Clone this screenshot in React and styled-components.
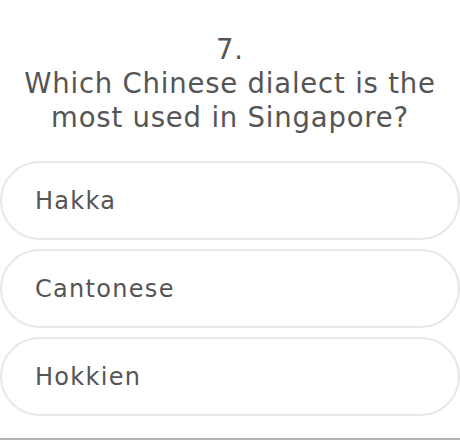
import React from 'react';
import styled, { createGlobalStyle } from 'styled-components';

const GlobalStyle = createGlobalStyle`
  body {
    margin: 0;
    background: #fff;
    font-family: "DejaVu Sans", "Liberation Sans", sans-serif;
  }
`;

const Page = styled.div`
  width: 460px;
  height: 440px;
  box-sizing: border-box;
  display: flex;
  flex-direction: column;
  border-bottom: 2px solid #b4b4b4;
  overflow: hidden;
`;

const Question = styled.h1`
  margin: 32px 0 0;
  font-size: 27.5px;
  font-weight: 400;
  line-height: 34px;
  letter-spacing: 0.8px;
  color: #555;
  text-align: center;
`;

const Options = styled.div`
  display: flex;
  flex-direction: column;
  gap: 9px;
  margin-top: 27px;
`;

const Option = styled.button`
  display: flex;
  align-items: center;
  width: 460px;
  height: 79px;
  box-sizing: border-box;
  padding: 0 0 0 33px;
  background: #fff;
  border: 2px solid #e8e8e8;
  border-radius: 40px;
  font-family: inherit;
  font-size: 24px;
  letter-spacing: 1.3px;
  color: #555;
  text-align: left;
  cursor: pointer;
`;

const options = ['Hakka', 'Cantonese', 'Hokkien'];

const App = () => {
    return (
        <>
            <GlobalStyle />
            <Page>
                <Question>
                    7.
                    <br />
                    Which Chinese dialect is the
                    <br />
                    most used in Singapore?
                </Question>
                <Options>
                    {options.map((o) => (
                        <Option key={o}>{o}</Option>
                    ))}
                </Options>
            </Page>
        </>
    );
};

export default App;
